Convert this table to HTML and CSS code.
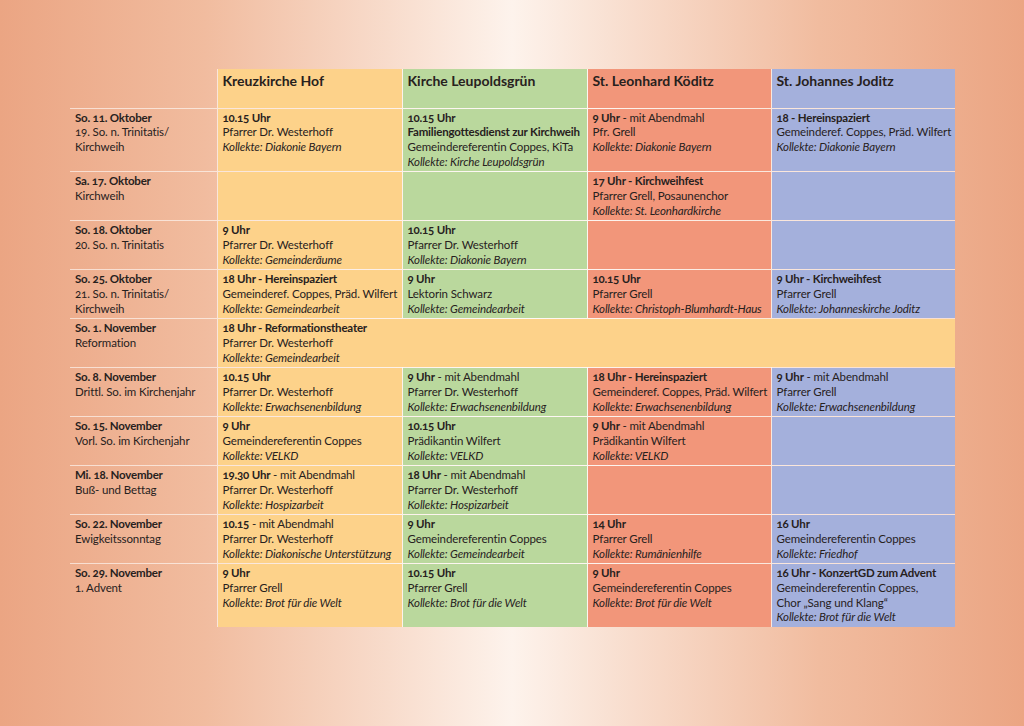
FILE: index.html
```html
<!DOCTYPE html>
<html lang="de">
<head>
<meta charset="utf-8">
<title>Gottesdienste Oktober / November</title>
<link rel="stylesheet" href="styles.css">
</head>
<body>
<main class="page">
<table class="plan">
  <colgroup>
    <col class="w-date"><col class="w-c"><col class="w-c"><col class="w-c4"><col class="w-c4">
  </colgroup>
  <thead>
    <tr>
      <th class="date"></th>
      <th class="c1">Kreuzkirche Hof</th>
      <th class="c2">Kirche Leupoldsgrün</th>
      <th class="c3">St. Leonhard Köditz</th>
      <th class="c4">St. Johannes Joditz</th>
    </tr>
  </thead>
  <tbody>
    <tr>
      <td class="date"><b>So. 11. Oktober</b><br>19. So. n. Trinitatis/<br>Kirchweih</td>
      <td class="c1"><b>10.15 Uhr</b><br>Pfarrer Dr. Westerhoff<br><i>Kollekte: Diakonie Bayern</i></td>
      <td class="c2"><b>10.15 Uhr</b><br><b>Familiengottesdienst zur Kirchweih</b><br>Gemeindereferentin Coppes, KiTa<br><i>Kollekte: Kirche Leupoldsgrün</i></td>
      <td class="c3"><b>9 Uhr</b> - mit Abendmahl<br>Pfr. Grell<br><i>Kollekte: Diakonie Bayern</i></td>
      <td class="c4"><b>18 - Hereinspaziert</b><br>Gemeinderef. Coppes, Präd. Wilfert<br><i>Kollekte: Diakonie Bayern</i></td>
    </tr>
    <tr>
      <td class="date"><b>Sa. 17. Oktober</b><br>Kirchweih</td>
      <td class="c1"></td>
      <td class="c2"></td>
      <td class="c3"><b>17 Uhr - Kirchweihfest</b><br>Pfarrer Grell, Posaunenchor<br><i>Kollekte: St. Leonhardkirche</i></td>
      <td class="c4"></td>
    </tr>
    <tr>
      <td class="date"><b>So. 18. Oktober</b><br>20. So. n. Trinitatis</td>
      <td class="c1"><b>9 Uhr</b><br>Pfarrer Dr. Westerhoff<br><i>Kollekte: Gemeinderäume</i></td>
      <td class="c2"><b>10.15 Uhr</b><br>Pfarrer Dr. Westerhoff<br><i>Kollekte: Diakonie Bayern</i></td>
      <td class="c3"></td>
      <td class="c4"></td>
    </tr>
    <tr>
      <td class="date"><b>So. 25. Oktober</b><br>21. So. n. Trinitatis/<br>Kirchweih</td>
      <td class="c1"><b>18 Uhr - Hereinspaziert</b><br>Gemeinderef. Coppes, Präd. Wilfert<br><i>Kollekte: Gemeindearbeit</i></td>
      <td class="c2"><b>9 Uhr</b><br>Lektorin Schwarz<br><i>Kollekte: Gemeindearbeit</i></td>
      <td class="c3"><b>10.15 Uhr</b><br>Pfarrer Grell<br><i>Kollekte: Christoph-Blumhardt-Haus</i></td>
      <td class="c4"><b>9 Uhr - Kirchweihfest</b><br>Pfarrer Grell<br><i>Kollekte: Johanneskirche Joditz</i></td>
    </tr>
    <tr>
      <td class="date"><b>So. 1. November</b><br>Reformation</td>
      <td class="c1" colspan="4"><b>18 Uhr - Reformationstheater</b><br>Pfarrer Dr. Westerhoff<br><i>Kollekte: Gemeindearbeit</i></td>
    </tr>
    <tr>
      <td class="date"><b>So. 8. November</b><br>Drittl. So. im Kirchenjahr</td>
      <td class="c1"><b>10.15 Uhr</b><br>Pfarrer Dr. Westerhoff<br><i>Kollekte: Erwachsenenbildung</i></td>
      <td class="c2"><b>9 Uhr</b> - mit Abendmahl<br>Pfarrer Dr. Westerhoff<br><i>Kollekte: Erwachsenenbildung</i></td>
      <td class="c3"><b>18 Uhr - Hereinspaziert</b><br>Gemeinderef. Coppes, Präd. Wilfert<br><i>Kollekte: Erwachsenenbildung</i></td>
      <td class="c4"><b>9 Uhr</b> - mit Abendmahl<br>Pfarrer Grell<br><i>Kollekte: Erwachsenenbildung</i></td>
    </tr>
    <tr>
      <td class="date"><b>So. 15. November</b><br>Vorl. So. im Kirchenjahr</td>
      <td class="c1"><b>9 Uhr</b><br>Gemeindereferentin Coppes<br><i>Kollekte: VELKD</i></td>
      <td class="c2"><b>10.15 Uhr</b><br>Prädikantin Wilfert<br><i>Kollekte: VELKD</i></td>
      <td class="c3"><b>9 Uhr</b> - mit Abendmahl<br>Prädikantin Wilfert<br><i>Kollekte: VELKD</i></td>
      <td class="c4"></td>
    </tr>
    <tr>
      <td class="date"><b>Mi. 18. November</b><br>Buß- und Bettag</td>
      <td class="c1"><b>19.30 Uhr</b> - mit Abendmahl<br>Pfarrer Dr. Westerhoff<br><i>Kollekte: Hospizarbeit</i></td>
      <td class="c2"><b>18 Uhr</b> - mit Abendmahl<br>Pfarrer Dr. Westerhoff<br><i>Kollekte: Hospizarbeit</i></td>
      <td class="c3"></td>
      <td class="c4"></td>
    </tr>
    <tr>
      <td class="date"><b>So. 22. November</b><br>Ewigkeitssonntag</td>
      <td class="c1"><b>10.15</b> - mit Abendmahl<br>Pfarrer Dr. Westerhoff<br><i>Kollekte: Diakonische Unterstützung</i></td>
      <td class="c2"><b>9 Uhr</b><br>Gemeindereferentin Coppes<br><i>Kollekte: Gemeindearbeit</i></td>
      <td class="c3"><b>14 Uhr</b><br>Pfarrer Grell<br><i>Kollekte: Rumänienhilfe</i></td>
      <td class="c4"><b>16 Uhr</b><br>Gemeindereferentin Coppes<br><i>Kollekte: Friedhof</i></td>
    </tr>
    <tr class="last">
      <td class="date"><b>So. 29. November</b><br>1. Advent</td>
      <td class="c1"><b>9 Uhr</b><br>Pfarrer Grell<br><i>Kollekte: Brot für die Welt</i></td>
      <td class="c2"><b>10.15 Uhr</b><br>Pfarrer Grell<br><i>Kollekte: Brot für die Welt</i></td>
      <td class="c3"><b>9 Uhr</b><br>Gemeindereferentin Coppes<br><i>Kollekte: Brot für die Welt</i></td>
      <td class="c4"><b>16 Uhr - KonzertGD zum Advent</b><br>Gemeindereferentin Coppes,<br>Chor „Sang und Klang“<br><i>Kollekte: Brot für die Welt</i></td>
    </tr>
  </tbody>
</table>
</main>
</body>
</html>
```

FILE: styles.css
```css
html, body {
  margin: 0;
  padding: 0;
  height: 100%;
}
body {
  background: linear-gradient(to right, #eba583 0%, #f1bc9f 20%, #f8dccc 38%, #fdf3ec 50%, #f8dccc 62%, #f1bc9f 80%, #eba583 100%);
  font-family: "Lato", "Open Sans", "Liberation Sans", sans-serif;
  color: #27211d;
  font-variant-numeric: oldstyle-nums;
}
.page {
  padding: 69px 0 0 70px;
}
.plan {
  border-collapse: collapse;
  table-layout: fixed;
  width: 885px;
}
.w-date { width: 147px; }
.w-c { width: 185px; }
.w-c4 { width: 184px; }

.plan th, .plan td {
  text-align: left;
  vertical-align: top;
  white-space: nowrap;
  overflow: hidden;
  border: 0;
  border-bottom: 1px solid rgba(255, 255, 255, 0.6);
  border-left: 1px solid rgba(255, 255, 255, 0.6);
}
.plan th.date, .plan td.date { border-left: 0; }
.plan th {
  font-size: 14px;
  font-weight: 700;
  line-height: 16px;
  height: 39px;
  box-sizing: border-box;
  padding: 4px 5px 18px;
}
.plan td {
  font-size: 11.5px;
  line-height: 14.67px;
  letter-spacing: -0.12px;
  padding: 2px 5px 2px;
}
.plan b {
  font-weight: 700;
  letter-spacing: -0.2px;
}
.plan i { font-style: italic; }
.plan tr.last td { border-bottom: 0; }

.c1 { background: #fdd28a; }
.c2 { background: #bad89d; }
.c3 { background: #f2967a; }
.c4 { background: #a4b0dc; }
```
